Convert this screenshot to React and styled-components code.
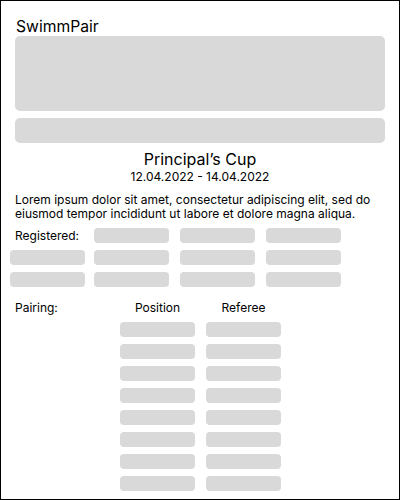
import styled, { createGlobalStyle } from 'styled-components'

const GlobalStyle = createGlobalStyle`
    body {
        margin: 0;
        font-family: Inter, "Noto Sans", sans-serif;
        color: #000;
    }
`

const Frame = styled.div`
    box-sizing: border-box;
    width: 400px;
    height: 500px;
    border: 1px solid #000;
    padding: 16px 14px 0 14px;
    display: flex;
    flex-direction: column;
    overflow: hidden;
`

const Brand = styled.div`
    font-size: 15.7px;
    line-height: 19px;
    padding-left: 1px;
`

const Block = styled.div`
    background: #d9d9d9;
    border-radius: 5px;
    height: ${props => props.h}px;
    margin-bottom: ${props => props.mb || 0}px;
`

const Title = styled.div`
    margin-top: 7px;
    text-align: center;
    font-size: 16px;
    line-height: 19px;
`

const Dates = styled.div`
    text-align: center;
    font-size: 12px;
    line-height: 15px;
`

const Paragraph = styled.p`
    margin: 9px 0 0 0;
    font-size: 12px;
    line-height: 14px;
`

const Label = styled.span`
    font-size: 12px;
    line-height: 15px;
    padding-left: ${props => props.indent || 0}px;
`

const Registered = styled.div`
    margin: 7px 0 0 -5px;
    display: grid;
    grid-template-columns: 84px 86px 86px 75px;
    row-gap: 7px;
    align-items: center;
`

const Pill = styled.div`
    width: 75px;
    height: 15px;
    border-radius: 4px;
    background: #d9d9d9;
`

const Pairing = styled.div`
    margin-top: 13px;
    display: grid;
    grid-template-columns: 94px 75px 75px;
    column-gap: 11px;
    row-gap: 7px;
    align-items: center;
`

const ColHead = styled.span`
    font-size: 12px;
    line-height: 15px;
    text-align: center;
`

const App = () => {
    const regRows = 3
    const pairRows = 8

    return (
        <>
            <GlobalStyle />
            <Frame>
                <Brand>SwimmPair</Brand>
                <Block h={75} mb={7} />
                <Block h={25} />
                <Title>Principal’s Cup</Title>
                <Dates>12.04.2022 - 14.04.2022</Dates>
                <Paragraph>
                    Lorem ipsum dolor sit amet, consectetur adipiscing elit, sed do eiusmod tempor incididunt ut labore et dolore magna aliqua.
                </Paragraph>
                <Registered>
                    <Label indent={5}>Registered:</Label>
                    <Pill /><Pill /><Pill />
                    {Array.from({ length: (regRows - 1) * 4 }).map((_, i) => <Pill key={i} />)}
                </Registered>
                <Pairing>
                    <Label>Pairing:</Label>
                    <ColHead>Position</ColHead>
                    <ColHead>Referee</ColHead>
                    {Array.from({ length: pairRows }).flatMap((_, i) => [
                        <span key={'s' + i} />,
                        <Pill key={'p' + i} />,
                        <Pill key={'r' + i} />
                    ])}
                </Pairing>
            </Frame>
        </>
    )
}

export default App
